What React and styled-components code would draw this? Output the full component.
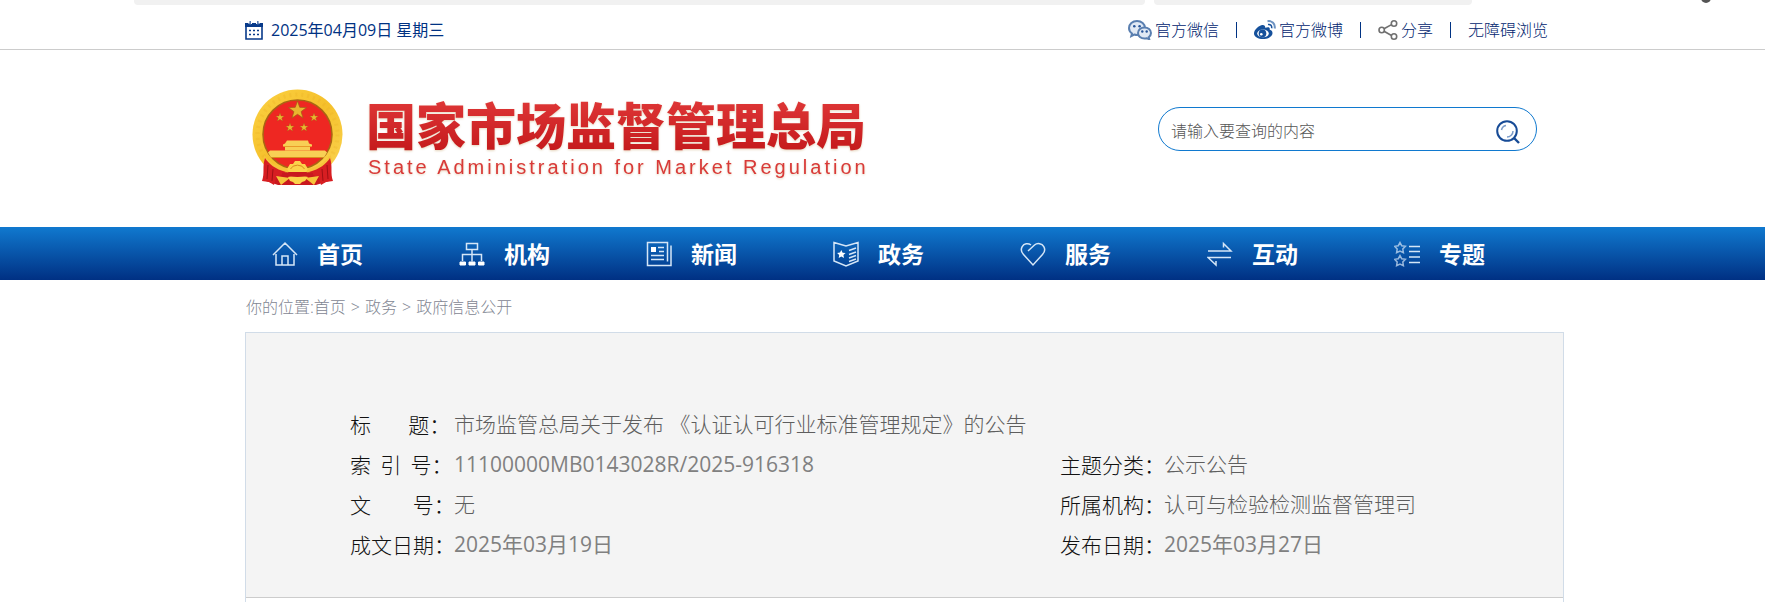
import { useState } from "react"
import styled, { createGlobalStyle } from "styled-components"

const navItems = [
    { name: "首页", icon: <HomeIcon /> },
    { name: "机构", icon: <OrgIcon /> },
    { name: "新闻", icon: <NewsIcon /> },
    { name: "政务", icon: <AffairsIcon /> },
    { name: "服务", icon: <HeartIcon /> },
    { name: "互动", icon: <ExchangeIcon /> },
    { name: "专题", icon: <TopicIcon /> }
]

const shortSpace = "\u00a0".repeat(2)
const titleSpace = "\u00a0".repeat(8)
const numberSpace = "\u00a0".repeat(9)

export default function App() {
    const [search, setSearch] = useState("")

    return (
        <>
            <GlobalStyle />

            <TabStrip>
                <Tab />
                <Tab />
                <TabDot />
            </TabStrip>

            <TopBar>
                <TopContent>
                    <Today>
                        <CalendarIcon />
                        <span>2025年04月09日 星期三</span>
                    </Today>

                    <TopLinks>
                        <TopLink href="#"><WechatIcon />官方微信</TopLink>
                        <Separator />
                        <TopLink href="#"><WeiboIcon />官方微博</TopLink>
                        <Separator />
                        <TopLink href="#"><ShareIcon />分享</TopLink>
                        <Separator />
                        <TopLink href="#">无障碍浏览</TopLink>
                    </TopLinks>
                </TopContent>
            </TopBar>

            <Section>
                <Header>
                    <Brand href="#">
                        <Emblem />
                        <BrandText>
                            <BrandName>国家市场监督管理总局</BrandName>
                            <BrandEnglish>State Administration for Market Regulation</BrandEnglish>
                        </BrandText>
                    </Brand>

                    <SearchForm onSubmit={e => e.preventDefault()}>
                        <SearchInput
                            type="text"
                            aria-label="请输入要查询的内容"
                            placeholder="请输入要查询的内容"
                            value={search}
                            onChange={e => setSearch(e.target.value)}
                        />
                        <SearchButton aria-label="搜索"><SearchIcon /></SearchButton>
                    </SearchForm>
                </Header>
            </Section>

            <NavBar>
                <NavList>
                    {navItems.map(item => (
                        <NavLink href="#" key={item.name}>
                            {item.icon}
                            {item.name}
                        </NavLink>
                    ))}
                </NavList>
            </NavBar>

            <Section>
                <Container>
                    <Breadcrumb>
                        <span>你的位置:<Crumb href="#">首页</Crumb></span>
                        <span>&gt;</span>
                        <Crumb href="#">政务</Crumb>
                        <span>&gt;</span>
                        <Crumb href="#">政府信息公开</Crumb>
                    </Breadcrumb>

                    <Article>
                        <InfoPanel>
                            <InfoTable>
                                <colgroup>
                                    <Col $width="104px" />
                                    <Col />
                                    <Col $width="104px" />
                                    <Col $width="295px" />
                                </colgroup>
                                <tbody>
                                    <tr>
                                        <Label scope="row">标{titleSpace}题：</Label>
                                        <Value colSpan={3}>市场监管总局关于发布 《认证认可行业标准管理规定》的公告</Value>
                                    </tr>
                                    <tr>
                                        <Label scope="row">索{shortSpace}引{shortSpace}号：</Label>
                                        <Value $numeric>11100000MB0143028R/2025-916318</Value>
                                        <Label scope="row">主题分类：</Label>
                                        <Value>公示公告</Value>
                                    </tr>
                                    <tr>
                                        <Label scope="row">文{numberSpace}号：</Label>
                                        <Value>无</Value>
                                        <Label scope="row">所属机构：</Label>
                                        <Value>认可与检验检测监督管理司</Value>
                                    </tr>
                                    <tr>
                                        <Label scope="row">成文日期：</Label>
                                        <Value $numeric>2025年03月19日</Value>
                                        <Label scope="row">发布日期：</Label>
                                        <Value $numeric>2025年03月27日</Value>
                                    </tr>
                                </tbody>
                            </InfoTable>
                        </InfoPanel>
                    </Article>
                </Container>
            </Section>
        </>
    )
}

function CalendarIcon() {
    return (
        <svg width="18" height="19" viewBox="0 0 18 19">
            <path d="M1 3.5h16V18H1z" fill="#fff" stroke="#083a8a" strokeWidth="1.6" />
            <path d="M0 2h18v4H0z" fill="#083a8a" />
            <path d="M4 0v3M6.500 0v3M11.500 0v3M14 0v3" stroke="#fff" strokeWidth="1" />
            <path d="M5.200 0v3.500M12.800 0v3.500" stroke="#5b7db4" strokeWidth="1.600" />
            <path d="M4 9.500h2M8 9.500h2M12 9.500h2M4 13.500h2M8 13.500h2M12 13.500h2" stroke="#083a8a" strokeWidth="1.600" />
        </svg>
    )
}

function WechatIcon() {
    return (
        <svg width="24" height="20" viewBox="0 0 24 20">
            <path d="M9 1C4.500 1 1 4 1 8c0 2.300 1.100 4.200 3 5.500L3.300 16l3-1.500c1 .3 1.800.5 2.700.5 4.600 0 8-3 8-7s-3.500-7-8-7z" fill="#e1e9f4" stroke="#5a7fb0" strokeWidth="2" />
            <circle cx="6.300" cy="6.300" r="1.300" fill="#28569a" />
            <circle cx="11.600" cy="6.300" r="1.300" fill="#28569a" />
            <path d="M16.500 7.500c-3.600 0-6.500 2.400-6.500 5.500s2.900 5.500 6.500 5.500c.8 0 1.500-.1 2.200-.3l2.600 1.200-.6-2.200c1.400-1 2.300-2.500 2.300-4.200 0-3.100-2.900-5.500-6.500-5.500z" fill="#e1e9f4" stroke="#5a7fb0" strokeWidth="2" />
            <circle cx="14.300" cy="11.500" r="1.200" fill="#28569a" />
            <circle cx="18.700" cy="11.500" r="1.200" fill="#28569a" />
        </svg>
    )
}

function WeiboIcon() {
    return (
        <svg width="22" height="20" viewBox="0 0 22 20">
            <path d="M8.500 5C5 5.300 0 9.700 0 13.500 0 17 4.300 19 9 19c5.500 0 9.500-2.800 9.500-6 0-2-1.500-2.900-2.800-3.300.5-2.200-.8-3.200-4.500-1.900C11.300 6 10.500 4.800 8.500 5z" fill="#15509b" />
            <ellipse cx="9" cy="13.400" rx="5.800" ry="3.900" fill="#fff" />
            <circle cx="8.500" cy="13.400" r="3.800" fill="#15509b" />
            <circle cx="7.300" cy="14.300" r="1.300" fill="#fff" />
            <path d="M14 4.500c2.500-.5 4.200 1.300 3.600 3.800" fill="none" stroke="#15509b" strokeWidth="1.500" />
            <path d="M13.500 1.200c4.500-.8 8 2.700 7.200 7.300" fill="none" stroke="#6d93c2" strokeWidth="2" />
        </svg>
    )
}

function ShareIcon() {
    return (
        <svg width="20" height="20" viewBox="0 0 20 20" fill="none" stroke="#707070" strokeWidth="1.600">
            <path d="M6 8.800l7.500-4.200M6 11.200l7.500 4.300" />
            <circle cx="3.700" cy="10" r="2.700" />
            <circle cx="16" cy="3.500" r="2.700" />
            <circle cx="16" cy="16.500" r="2.700" />
        </svg>
    )
}

function SearchIcon() {
    return (
        <svg width="24" height="24" viewBox="0 0 24 24" fill="none" stroke="#174b96">
            <circle cx="11" cy="11" r="9.800" strokeWidth="2" />
            <path d="M5.500 10a5.500 5.500 0 0 1 4.500-4.500M11 17a6 6 0 0 0 6-6" stroke="#7b9bc8" strokeWidth="1.500" />
            <path d="M18 18l5 5" strokeWidth="2.400" />
        </svg>
    )
}

function HomeIcon() {
    return (
        <NavSvg viewBox="0 0 26 26">
            <path d="M1 14L13 2l12 12M4 13v11h18V13M10 24V15h6v9" />
        </NavSvg>
    )
}

function OrgIcon() {
    return (
        <NavSvg viewBox="0 0 26 26">
            <path d="M7.500 2.500h11v6h-11zM13 8.500v12M3.500 20v-6.500h19V20" />
            <path d="M1 21h5.500v3H1zM10 21h6v3h-6zM19.500 21H25v3h-5.500z" fill="#fff" stroke="#fff" strokeWidth="1" />
        </NavSvg>
    )
}

function NewsIcon() {
    return (
        <NavSvg viewBox="0 0 26 26">
            <path d="M21.500 20V1.500h-20v23H25v-20M21.500 20.500v-1M12 6.500h6M13 10.500h5M5 14.500h13M5 18.500h13" />
            <path d="M5 6h5v5H5z" fill="#fff" stroke="none" />
        </NavSvg>
    )
}

function AffairsIcon() {
    return (
        <NavSvg viewBox="0 0 26 26">
            <path d="M1 1.500l12 3.500 12-3.500V20l-12 5-12-5zM16 9.500l7-2.500M16 13.500l7-2.500M16 17l7-2.500M16 20.500l7-2.500" />
            <path d="M8.300 9l1.300 2.700 3 .4-2.200 2 .6 3-2.700-1.500L5.700 17l.5-3-2.100-2 2.900-.4z" fill="#fff" stroke="none" />
        </NavSvg>
    )
}

function HeartIcon() {
    return (
        <NavSvg viewBox="0 0 26 26">
            <path d="M8 10L14.500 4c3-2.500 7.500-1.500 9.300 1.600 1.500 2.700 1 5.500-1.300 7.900L13 24 3.500 13.500C1.200 11.100.7 8.300 2.200 5.600 4 2.500 8 1.700 11 4" />
        </NavSvg>
    )
}

function ExchangeIcon() {
    return (
        <NavSvg viewBox="0 0 26 26">
            <path d="M1 10h23l-7.500-7.500v4M24 16.500H1L9 24v-4" />
        </NavSvg>
    )
}

function TopicIcon() {
    return (
        <NavSvg viewBox="0 0 26 26">
            <path d="M6 1.500l1.700 3.200 3.700.6-2.600 2.600.6 3.700L6 10l-3.400 1.600.6-3.700L.6 5.300l3.700-.6zM6 14.500l1.700 3.200 3.700.6-2.600 2.600.6 3.700L6 23l-3.400 1.600.6-3.700-2.600-2.600 3.700-.6z" opacity="0.700" />
            <path d="M15 5.500h11M15 10.500h11M15 16h11M15 21.500h11" />
        </NavSvg>
    )
}

function Star({ x, y, size }) {
    return (
        <path
            transform={`translate(${x} ${y}) scale(${size})`}
            d="M0-1l.24.67.71.02-.57.43.21.68L0 .4l-.59.4.21-.68-.57-.43.71-.02z"
            fill="#e9b62f"
            stroke="#a85a18"
            strokeWidth="0.08"
        />
    )
}

function Emblem() {
    return (
        <svg width="91" height="97" viewBox="0 0 91 97">
            <defs>
                <linearGradient id="gold" x1="0" y1="0" x2="1" y2="1">
                    <stop offset="0" stopColor="#fbd142" />
                    <stop offset="0.5" stopColor="#f5c02b" />
                    <stop offset="1" stopColor="#fbd553" />
                </linearGradient>
            </defs>
            <circle cx="45.500" cy="45.500" r="45" fill="url(#gold)" />
            <circle cx="45.500" cy="45.500" r="40" fill="none" stroke="#e8a51c" strokeWidth="4" strokeDasharray="2 4" opacity="0.200" />
            <circle cx="45.500" cy="45.500" r="34.500" fill="#ee2722" stroke="#a96413" strokeWidth="1.500" />
            <Star x={45.5} y={21.5} size={9.5} />
            <Star x={28} y={28.5} size={4.5} />
            <Star x={62} y={28.5} size={4.5} />
            <Star x={38} y={38.5} size={4.5} />
            <Star x={52} y={38.5} size={4.5} />
            {/* Tiananmen */}
            <path d="M35 51.500h21l1 3 3 1v2H31v-2l2-1zM33 57h25v4.500h-25z" fill="#f8cf55" />
            <path d="M18 61.500h55l2 2-3 5H19l-3-5z" fill="#f8cf55" />
            <path d="M32 57.500h27" stroke="#e99a29" strokeWidth="1" />
            <path d="M19 68.500h53" stroke="#d98d20" strokeWidth="1" />
            {/* ribbons and cog wheel */}
            <path d="M15 74l16 9h29l16-9 1 18-13 4H26l-12-4z" fill="#c9181e" />
            <path d="M12 66c7 9 15 13 26 14l-2 4c-11 0-19-4-24-11zM79 66c-7 9-15 13-26 14l2 4c11 0 19-4 24-11z" fill="#f6c33b" />
            <path d="M13 69c4 6 10 11 21 14l-6 4-4 2-2 7-5-3-7-1c3-8 0-14 3-23zM78 69c-4 6-10 11-21 14l6 4 4 2 2 7 5-3 7-1c-3-8 0-14-3-23z" fill="#d71e22" />
            <path d="M24 87l14 2-9 7zM67 87l-14 2 9 7z" fill="#f6c33b" />
            <path d="M35 80l3-5h3l2-3h5l2 3h3l3 5-2 3H37z" fill="#fbd34b" />
            <path d="M36 88l3-1h14l3 1-3 4-3 1-2 2h-5l-2-2-3-1z" fill="#fbd34b" />
            <path d="M38.500 80a7.500 6 0 0 1 14 0" fill="none" stroke="#d98a1d" strokeWidth="1" />
            <path d="M30 84c6-2 11 1 15.500 1S55 82 61 84v3c-6 0-10 1-15.500 1S36 87 30 87z" fill="#c8191f" />
            <path d="M16 76l-1 14M21 80l-1 12M75 76l1 14M70 80l1 12" fill="none" stroke="#9f1014" strokeWidth="1" />
        </svg>
    )
}

const GlobalStyle = createGlobalStyle`
    * {
        box-sizing: border-box;
    }

    body {
        margin: 0;
        background-color: #FFFFFF;
        font-family: "Open Sans", "Noto Sans CJK SC", sans-serif;
        font-size: 16px;
        line-height: 24px;
    }

    a {
        color: inherit;
        text-decoration: none;
    }

    svg {
        flex-shrink: 0;
    }
`

const TabStrip = styled.div`
    display: grid;
    grid-template-columns: 1011fr 318fr 284fr;
    gap: 9px;
    height: 5px;
    padding-left: 134px;
    overflow: hidden;
`

const Tab = styled.div`
    background-color: #F1F1F1;
    border-radius: 0 0 4px 4px;
`

const TabDot = styled.div`
    width: 10px;
    height: 10px;
    margin-top: -7px;
    margin-left: 220px;
    border-radius: 50%;
    background-color: #555555;
`

const Section = styled.div`
    padding-left: 44px;
`

const Container = styled.div`
    max-width: 1319px;
    margin: 0 auto;
`

const TopBar = styled(Section)`
    border-bottom: 1px solid #CCCCCC;
    font-weight: 300;
    color: #003283;
`

const TopContent = styled(Container)`
    display: flex;
    align-items: center;
    justify-content: space-between;
    height: 44px;
    padding: 6px 16px 0 0;
`

const Today = styled.div`
    display: flex;
    align-items: center;
    gap: 8px;
    font-weight: normal;
`

const TopLinks = styled.div`
    display: flex;
    align-items: center;
    gap: 17px;
    color: #00246E;
`

const TopLink = styled.a`
    display: flex;
    align-items: center;
    gap: 3px;
`

const Separator = styled.span`
    width: 1px;
    height: 16px;
    background-color: #003283;
`

const Header = styled(Container)`
    display: flex;
    justify-content: space-between;
    height: 177px;
    padding: 39px 27px 0 7px;
`

const Brand = styled.a`
    display: flex;
    gap: 23px;
`

const BrandText = styled.div`
    display: flex;
    flex-direction: column;
    padding-top: 4px;
    filter: drop-shadow(0 1px 1px #E5D5BC);
`

const BrandName = styled.h1`
    margin: 0;
    font-family: "Noto Sans CJK SC", sans-serif;
    font-size: 50px;
    font-weight: 900;
    line-height: 60px;
    color: transparent;
    background: linear-gradient(#E23A3A, #C4191B);
    background-clip: text;
`

const BrandEnglish = styled.span`
    padding-left: 2px;
    font-family: "Liberation Sans", sans-serif;
    font-size: 20px;
    line-height: 28px;
    letter-spacing: 3px;
    white-space: nowrap;
    color: #D93A38;
`

const SearchForm = styled.form`
    display: flex;
    align-items: center;
    width: 379px;
    height: 44px;
    margin-top: 18px;
    padding: 0 16px 0 12px;
    border: 1px solid #1079CF;
    border-radius: 22px;
`

const SearchInput = styled.input`
    flex: 1;
    min-width: 0;
    padding: 4px 0 0;
    border: 0;
    outline: 0;
    background: none;
    font: inherit;
    font-weight: 300;

    &::placeholder {
        color: #555555;
    }
`

const SearchButton = styled.button`
    display: flex;
    padding: 6px 0 0;
    border: 0;
    background: none;
    cursor: pointer;
`

const NavBar = styled.nav`
    padding-left: 44px;
    background: linear-gradient(#1079CF, #003083);
`

const NavList = styled(Container)`
    display: flex;
    padding-right: 10px;
`

const NavLink = styled.a`
    display: flex;
    flex: 1;
    align-items: center;
    gap: 19px;
    height: 53px;
    padding-left: 27px;
    font-size: 23px;
    font-weight: bold;
    color: white;
`

const NavSvg = styled.svg`
    width: 26px;
    height: 26px;
    fill: none;
    stroke: #D5E6F7;
    stroke-width: 1.5;
`

const Breadcrumb = styled.div`
    display: flex;
    gap: 5px;
    height: 52px;
    padding-top: 15px;
    padding-left: 1px;
    font-weight: 300;
    color: #7F8692;
`

const Crumb = styled.a`
    &:hover {
        color: #003283;
    }
`

const Article = styled.div`
    min-height: 270px;
    border: 1px solid #D1DCE8;
    border-bottom: 0;
`

const InfoPanel = styled.div`
    padding: 71px 104px 33px;
    background-color: #F4F4F4;
    border-bottom: 1px solid #CCCCCC;
`

const InfoTable = styled.table`
    width: 100%;
    table-layout: fixed;
    border-collapse: collapse;
    font-size: 21px;
    line-height: 40px;
`

const Col = styled.col`
    width: ${props => props.$width || "auto"};
`

const Label = styled.th`
    padding: 0;
    font-family: "Noto Sans CJK SC", sans-serif;
    font-weight: 300;
    text-align: left;
    white-space: nowrap;
    color: #111111;
`

const Value = styled.td`
    padding: 0;
    font-weight: ${props => props.$numeric ? "normal" : "300"};
    color: ${props => props.$numeric ? "#808080" : "#5E5E5E"};
`
